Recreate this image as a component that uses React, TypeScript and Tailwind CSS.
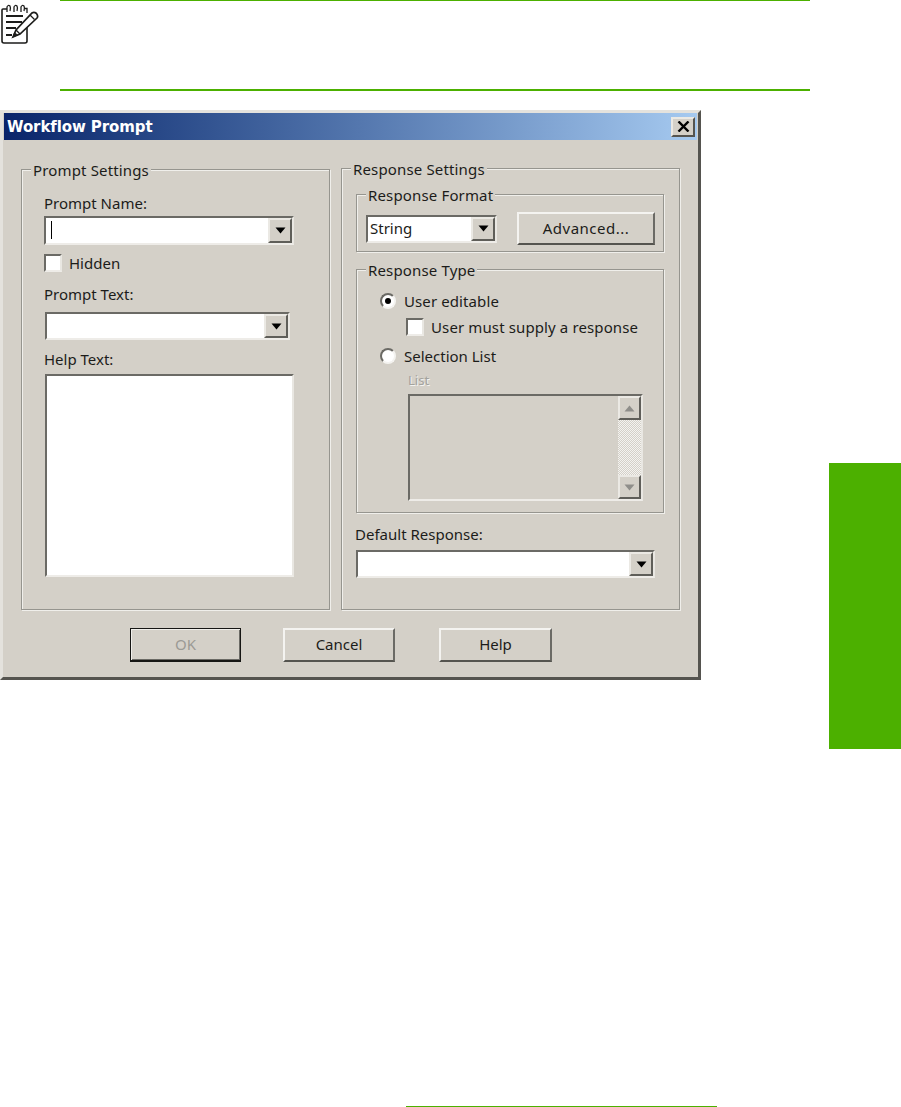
import type { ReactNode } from 'react';

const sunken = 'border-2 border-t-[#6b6a65] border-l-[#6b6a65] border-r-[#e9e7e2] border-b-[#eeece8]';

function Arrow({ up, muted }: { up?: boolean; muted?: boolean }) {
  return (
    <svg width="11" height="7" viewBox="0 0 11 7" className={muted ? 'text-[#8f8e8a]' : 'text-black'}>
      <path d={up ? 'M5.5 0.5 L10.5 6.5 H0.5 Z' : 'M0.5 0.5 H10.5 L5.5 6.5 Z'} fill="currentColor" />
    </svg>
  );
}

function ArrowButton({ up, muted, className }: { up?: boolean; muted?: boolean; className: string }) {
  return (
    <div className={`flex items-center justify-center shrink-0 bg-[#d4d0c8] border-2 border-t-[#ebe9e4] border-l-[#ebe9e4] border-r-[#5f5e59] border-b-[#5f5e59] ${className}`}>
      <Arrow up={up} muted={muted} />
    </div>
  );
}

function Combo({ className, children }: { className: string; children?: ReactNode }) {
  return (
    <div className={`flex bg-white ${sunken} ${className}`}>
      <div className="flex-1 flex items-center pl-[2px] pb-px text-[15px]">{children}</div>
      <ArrowButton className="w-[24px]" />
    </div>
  );
}

function Group({ title, className, children }: { title: string; className: string; children: ReactNode }) {
  return (
    <div className={`relative border border-[#96958f] shadow-[1px_1px_0_#f0efeb,inset_1px_1px_0_#f0efeb] ${className}`}>
      <span className="absolute -top-[10px] left-[9px] h-[20px] leading-[20px] px-[2px] bg-[#d4d0c8] whitespace-nowrap tracking-[0.15px]">{title}</span>
      {children}
    </div>
  );
}

function CheckBox() {
  return <div className={`w-[18px] h-[18px] shrink-0 bg-white ${sunken}`} />;
}

function Radio({ checked }: { checked?: boolean }) {
  return (
    <div className="w-[16px] h-[16px] shrink-0 flex items-center justify-center rounded-full bg-white border-2 border-t-[#6b6a65] border-l-[#6b6a65] border-r-[#f4f3f0] border-b-[#f4f3f0]">
      {checked && <div className="w-[6px] h-[6px] rounded-full bg-black" />}
    </div>
  );
}

function PushButton({ label, className, disabled, isDefault }: { label: string; className: string; disabled?: boolean; isDefault?: boolean }) {
  const edge = isDefault
    ? 'border border-b-2 border-[#161614] shadow-[inset_1px_1px_0_#f0efeb,inset_-1px_-1px_0_#6b6a65]'
    : 'border-2 border-t-[#f4f3f0] border-l-[#f4f3f0] border-r-[#6b6a65] border-b-[#55544f]';
  return (
    <div className={`flex items-center justify-center shrink-0 pb-[2px] bg-[#d4d0c8] ${edge} ${className} ${disabled ? 'text-[#9b9a95]' : ''}`}>
      {label}
    </div>
  );
}

function NoteIcon() {
  return (
    <svg width="38" height="40" viewBox="0 0 38 40" fill="none" stroke="#1d1d1b" className="mt-[4px] ml-[1px]">
      <path d="M6 5 H2 Q1 5 1 6 V37 Q1 39 3 39 H24 Q26 39 26 37 V17" strokeWidth="1.600" />
      <path d="M6 8 V3 Q7 0.500 9 2 Q10 4 9 7 M13 8 V3 Q14 0.500 16 2 Q17 4 16 7 M20 8 V3 Q21 0.500 23 2 Q24 4 23 7 M24 4.500 H26 V9" strokeWidth="1.300" />
      <path d="M5 12 H22 M5 18 H21 M5 24 H15 M5 31 H11" strokeWidth="2" />
      <path d="M12 33 L15 26 L31 9 Q33 7.500 35.500 9.500 Q37.500 12 36 14 L19 30 Z" fill="#ffffff" strokeWidth="1.700" />
      <path d="M15 26 L19 30 M29 11 L33.500 15.500" strokeWidth="1.300" />
      <path d="M12 33 L13.500 28.500 L16.500 31 Z" fill="#1d1d1b" strokeWidth="0.800" />
    </svg>
  );
}

function CloseButton() {
  return (
    <div className="flex items-center justify-center w-[24px] h-[20px] mr-[2px] bg-[#d4d0c8] border-2 border-t-[#ebe9e4] border-l-[#ebe9e4] border-r-[#55544f] border-b-[#55544f]">
      <svg width="13" height="11" viewBox="0 0 13 11" stroke="#000000" strokeWidth="2.400">
        <path d="M1.500 0.500 L11.500 10.500 M11.500 0.500 L1.500 10.500" />
      </svg>
    </div>
  );
}

export default function App() {
  return (
    <div className="flex w-[901px] h-[1107px] bg-white overflow-hidden font-['Noto_Sans',sans-serif] text-[15px] leading-[18px] text-[#1c1c1a]">
      <div className="w-[829px] flex flex-col">
        <div className="flex">
          <div className="w-[60px]">
            <NoteIcon />
          </div>
          <div className="w-[750px] h-[91px] border-t border-b-2 border-[#4cb000]" />
        </div>

        <div className="mt-[19px] w-[701px] h-[570px] bg-[#d4d0c8] border-[3px] border-t-[#e4e2dd] border-l-[#e4e2dd] border-r-[#55544f] border-b-[#55544f] flex flex-col">
          <div className="mx-px flex items-center justify-between h-[27px] bg-gradient-to-r from-[#0a246a] to-[#a6caf0] shrink-0">
            <span className="pl-[3px] font-bold text-white text-[15px] font-['DejaVu_Sans',sans-serif] tracking-[-0.1px]">Workflow Prompt</span>
            <CloseButton />
          </div>

          <div className="flex items-start ml-[18px] mt-[28px]">
            <Group title="Prompt Settings" className="w-[309px] h-[441px] mt-px pt-[24px] pl-[22px]">
              <div>Prompt Name:</div>
              <Combo className="mt-[4px] w-[250px] h-[29px]">
                <div className="w-px h-[18px] bg-black ml-[3px]" />
              </Combo>
              <div className="flex items-center gap-[7px] mt-[9px]">
                <CheckBox />
                <span>Hidden</span>
              </div>
              <div className="mt-[13px]">Prompt Text:</div>
              <Combo className="mt-[9px] ml-px w-[245px] h-[28px]" />
              <div className="mt-[10px]">Help Text:</div>
              <div className={`mt-[6px] ml-px w-[249px] h-[203px] bg-white ${sunken}`} />
            </Group>

            <Group title="Response Settings" className="ml-[11px] w-[339px] h-[442px] pt-[25px] pl-[14px]">
              <Group title="Response Format" className="w-[308px] h-[58px] pt-[17px] pl-[9px]">
                <div className="flex items-center">
                  <Combo className="w-[131px] h-[28px]">String</Combo>
                  <PushButton label="Advanced..." className="ml-[20px] w-[138px] h-[33px] tracking-[0.5px]" />
                </div>
              </Group>

              <Group title="Response Type" className="mt-[17px] w-[308px] h-[244px] pt-[22px] pl-[23px]">
                <div className="flex items-center gap-[8px]">
                  <Radio checked />
                  <span className="tracking-[0.1px]">User editable</span>
                </div>
                <div className="flex items-center gap-[7px] mt-[8px] ml-[26px]">
                  <CheckBox />
                  <span className="tracking-[0.12px]">User must supply a response</span>
                </div>
                <div className="flex items-center gap-[8px] mt-[11px]">
                  <Radio />
                  <span>Selection List</span>
                </div>
                <div className="mt-[6px] ml-[28px] text-[13px] text-[#a3a29d] [text-shadow:1px_1px_0_#f4f3f0]">List</div>
                <div className={`flex justify-end mt-[5px] ml-[28px] w-[235px] h-[107px] ${sunken}`}>
                  <div className="flex flex-col w-[23px]">
                    <ArrowButton up muted className="h-[24px]" />
                    <div className="flex-1 bg-[repeating-conic-gradient(#d4d0c8_0_25%,#f4f3f0_0_50%)] bg-[length:2px_2px]" />
                    <ArrowButton muted className="h-[24px]" />
                  </div>
                </div>
              </Group>

              <div className="mt-[12px] -ml-px">Default Response:</div>
              <Combo className="mt-[7px] w-[299px] h-[28px]" />
            </Group>
          </div>

          <div className="flex ml-[127px] mt-[18px]">
            <PushButton label="OK" disabled isDefault className="w-[111px] h-[34px]" />
            <PushButton label="Cancel" className="ml-[42px] w-[112px] h-[34px]" />
            <PushButton label="Help" className="ml-[44px] w-[113px] h-[34px]" />
          </div>
        </div>

        <div className="mt-auto ml-[406px] w-[311px] h-px bg-[#4cb000]" />
      </div>

      <div className="w-[72px] h-[286px] mt-[463px] bg-[#4cb000]" />
    </div>
  );
}
